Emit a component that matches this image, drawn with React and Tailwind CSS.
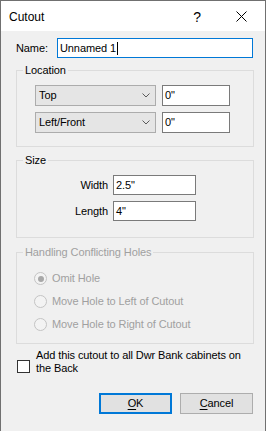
function GroupBox({ label, disabled, className, children }) {
  return (
    <div className={`relative border border-[#dcdcdc] ${className}`}>
      <span
        className={`absolute left-[6px] -top-[8px] px-[2px] bg-[#f0f0f0] leading-[14px] whitespace-nowrap ${
          disabled ? 'text-[#a0a0a0]' : 'text-black'
        }`}
      >
        {label}
      </span>
      {children}
    </div>
  );
}

function Combo({ value }) {
  return (
    <div className="w-[121px] h-[21px] bg-[#e5e5e5] border border-[#acacac] flex items-center justify-between pl-[3px] pr-[5px]">
      <span>{value}</span>
      <svg width="8" height="5" viewBox="0 0 8 5" fill="none">
        <path d="M0.5 0.5 L4 4 L7.5 0.5" stroke="#5a5a5a" strokeWidth="1" />
      </svg>
    </div>
  );
}

function Edit({ value, className }) {
  return (
    <div className={`bg-white border border-[#7a7a7a] flex items-center pl-[2px] ${className}`}>
      <span>{value}</span>
    </div>
  );
}

function Radio({ label, checked }) {
  return (
    <div className="h-[23px] flex items-center text-[#a0a0a0]">
      <div className="w-[13px] h-[13px] rounded-full border border-[#c4c4c4] bg-[#f3f3f3] flex items-center justify-center">
        {checked && <div className="w-[6px] h-[6px] rounded-full bg-[#a8a8a8]" />}
      </div>
      <span className="ml-[5px]">{label}</span>
    </div>
  );
}

export default function App() {
  return (
    <div className="w-[266px] h-[431px] bg-[#f0f0f0] border-x border-t border-[#707070] flex flex-col text-[11px] text-black font-['Liberation_Sans',Arial,sans-serif] tracking-[-0.1px] overflow-hidden">
      {/* Title bar */}
      <div className="h-[30px] bg-white flex items-center pl-[8px] shrink-0">
        <span className="text-[12px] tracking-normal mt-[1px]">Cutout</span>
        <span className="ml-auto text-[14px] leading-none mr-[35px] mt-[1px]">?</span>
        <svg width="11" height="11" viewBox="0 0 11 11" className="mr-[18px]" fill="none">
          <path d="M0.5 0.5 L10.5 10.5 M10.5 0.5 L0.5 10.5" stroke="#000" strokeWidth="1" />
        </svg>
      </div>

      {/* Body */}
      <div className="flex flex-col pl-[15px] pr-[11px]">
        <div className="flex items-center mt-[7px]">
          <span className="w-[41px]">Name:</span>
          <div className="w-[196px] h-[20px] bg-white border border-[#0078d7] flex items-center pl-[2px]">
            <span>Unnamed 1</span>
            <span className="w-px h-[13px] bg-black ml-[1px]" />
          </div>
        </div>

        <GroupBox label="Location" className="mt-[12px] w-[238px] h-[77px] pt-[14px] pl-[18px] flex flex-col gap-[6px]">
          <div className="flex gap-[6px]">
            <Combo value="Top" />
            <Edit value={'0"'} className="w-[68px] h-[21px]" />
          </div>
          <div className="flex gap-[6px]">
            <Combo value="Left/Front" />
            <Edit value={'0"'} className="w-[68px] h-[21px]" />
          </div>
        </GroupBox>

        <GroupBox label="Size" className="mt-[13px] w-[238px] h-[78px] pt-[14px] flex flex-col gap-[6px]">
          <div className="flex items-center">
            <span className="w-[91px] text-right">Width</span>
            <Edit value={'2.5"'} className="ml-[5px] w-[83px] h-[20px]" />
          </div>
          <div className="flex items-center">
            <span className="w-[91px] text-right">Length</span>
            <Edit value={'4"'} className="ml-[5px] w-[83px] h-[20px]" />
          </div>
        </GroupBox>

        <GroupBox label="Handling Conflicting Holes" disabled className="mt-[14px] w-[238px] h-[92px] pt-[14px] pl-[17px]">
          <Radio label="Omit Hole" checked />
          <Radio label="Move Hole to Left of Cutout" />
          <Radio label="Move Hole to Right of Cutout" />
        </GroupBox>

        <div className="flex items-start mt-[5px]">
          <div className="w-[13px] h-[13px] border border-[#333] bg-white mt-[11px] ml-px shrink-0" />
          <p className="ml-[6px] w-[214px] leading-[13px]">
            Add this cutout to all Dwr Bank cabinets on the Back
          </p>
        </div>

        <div className="flex justify-end gap-[8px] mt-[18px] pr-[1px]">
          <button className="w-[73px] h-[21px] bg-[#e1e1e1] border-2 border-[#0078d7] flex items-center justify-center">
            <span>
              <span className="underline underline-offset-2">O</span>K
            </span>
          </button>
          <button className="w-[73px] h-[21px] bg-[#e1e1e1] border border-[#adadad] flex items-center justify-center">
            <span>
              <span className="underline underline-offset-2">C</span>ancel
            </span>
          </button>
        </div>
      </div>
    </div>
  );
}
